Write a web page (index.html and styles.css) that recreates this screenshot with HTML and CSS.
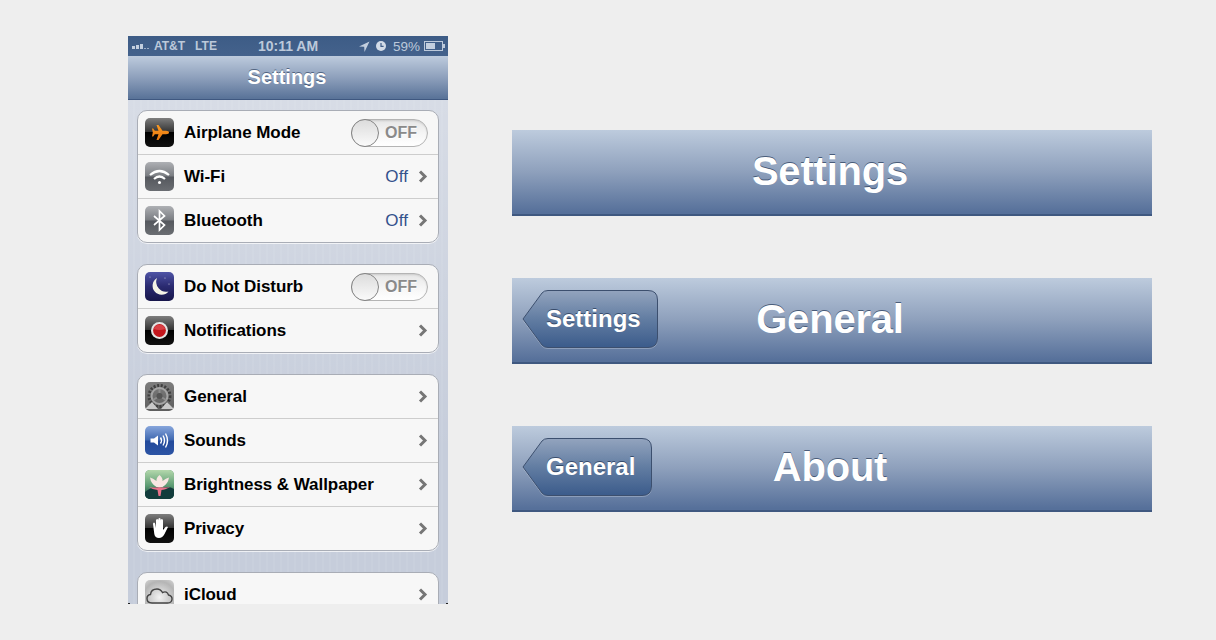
FILE: index.html
```html
<!DOCTYPE html>
<html lang="en">
<head>
  <meta charset="UTF-8" />
  <title>Settings navigation</title>
  <link rel="stylesheet" href="styles.css">
</head>
<body>
  <svg class="defs" width="0" height="0">
    <defs>
      <linearGradient id="backFill" x1="0" y1="0" x2="0" y2="1">
        <stop offset="0" stop-color="#93a4be" />
        <stop offset="0.5" stop-color="#627da2" />
        <stop offset="1" stop-color="#3b5b8b" />
      </linearGradient>
      <linearGradient id="lotusBg" x1="0" y1="0" x2="0" y2="1">
        <stop offset="0" stop-color="#b4d8ac" />
        <stop offset="0.55" stop-color="#5a9a72" />
        <stop offset="1" stop-color="#0f3a3a" />
      </linearGradient>
      <linearGradient id="planeFill" x1="0" y1="0" x2="0" y2="1">
        <stop offset="0" stop-color="#fb9a22" />
        <stop offset="1" stop-color="#e8760f" />
      </linearGradient>
    </defs>
  </svg>

  <div class="phone">
    <div class="status-bar">
      <div class="status-left">
        <span class="signal"><i class="b1"></i><i class="b2"></i><i class="b3"></i><i class="b4"></i><i class="b5"></i></span>
        <span>AT&amp;T</span>
        <span class="lte">LTE</span>
      </div>
      <div class="status-time">10:11 AM</div>
      <div class="status-right">
        <svg width="11" height="11" viewBox="0 0 11 11"><path d="M10.5 .5 L0 5.5 L5.2 5.8 L5.5 11 Z" fill="#c3cfdf" /></svg>
        <svg class="clock" width="10" height="10" viewBox="0 0 10 10"><circle cx="5" cy="5" r="5" fill="#d3dce8" /><path d="M5 2 V5.4 H7.6" stroke="#3f5e88" stroke-width="1.2" fill="none" /></svg>
        <span class="pct">59%</span>
        <span class="battery"><i></i></span>
      </div>
    </div>
    <div class="nav-bar"><span class="nav-title">Settings</span></div>

    <div class="content">
      <div class="group">
        <div class="row">
          <span class="icon icon-gloss">
            <svg viewBox="0 0 29 29"><path d="M24 14.5 Q24 12.8 21 12.8 L17.5 12.8 L13.5 7 L11.5 7 L13.5 12.8 L9.8 12.8 L8.2 10.5 L7 10.5 L7.8 14.5 L7 18.5 L8.2 18.5 L9.8 16.2 L13.5 16.2 L11.5 22 L13.5 22 L17.5 16.2 L21 16.2 Q24 16.2 24 14.5 Z" fill="url(#planeFill)" /></svg>
          </span>
          <span class="label">Airplane Mode</span>
          <span class="toggle"><span class="knob"></span><span class="toggle-text">OFF</span></span>
        </div>
        <div class="row">
          <span class="icon icon-grey">
            <svg viewBox="0 0 29 29" fill="none" stroke="#fff" stroke-width="2.2"><path d="M5 13 Q14.5 5 24 13" /><path d="M9 17 Q14.5 12 20 17" /><circle cx="14.5" cy="20.5" r="1.5" fill="#fff" stroke="none" /></svg>
          </span>
          <span class="label">Wi-Fi</span>
          <span class="value">Off</span>
          <svg class="chevron" viewBox="0 0 10 13"><path d="M2 1.5 L7 6.5 L2 11.5" /></svg>
        </div>
        <div class="row">
          <span class="icon icon-grey">
            <svg viewBox="0 0 29 29" fill="none" stroke="#fff" stroke-width="1.7"><path d="M9 10 L19.5 19 L14.5 24 V5 L19.5 10 L9 19" /></svg>
          </span>
          <span class="label">Bluetooth</span>
          <span class="value">Off</span>
          <svg class="chevron" viewBox="0 0 10 13"><path d="M2 1.5 L7 6.5 L2 11.5" /></svg>
        </div>
      </div>

      <div class="group">
        <div class="row">
          <span class="icon icon-moon">
            <svg viewBox="0 0 29 29"><path d="M12 6 A9 9 0 1 0 23.5 19.5 A10 10 0 0 1 12 6 Z" fill="#f4f3e6" /><circle cx="20" cy="6" r=".6" fill="#ccd" /><circle cx="24" cy="12" r=".6" fill="#ccd" /><circle cx="5" cy="5" r=".5" fill="#ccd" /></svg>
          </span>
          <span class="label">Do Not Disturb</span>
          <span class="toggle"><span class="knob"></span><span class="toggle-text">OFF</span></span>
        </div>
        <div class="row">
          <span class="icon icon-gloss">
            <svg viewBox="0 0 29 29"><circle cx="14.5" cy="14.5" r="8.5" fill="#e4e4e4" /><circle cx="14.5" cy="14.5" r="6.4" fill="#c4161c" /><path d="M8.8 13 A6 6 0 0 1 20.2 13 Q14.5 15 8.8 13 Z" fill="#d84045" /></svg>
          </span>
          <span class="label">Notifications</span>
          <svg class="chevron" viewBox="0 0 10 13"><path d="M2 1.5 L7 6.5 L2 11.5" /></svg>
        </div>
      </div>

      <div class="group">
        <div class="row">
          <span class="icon icon-general">
            <svg viewBox="0 0 29 29"><circle cx="14.5" cy="14" r="10.5" fill="none" stroke="#3f3f3f" stroke-width="3" stroke-dasharray="2 1.6" /><circle cx="14.5" cy="14" r="8" fill="none" stroke="#a5a5a5" stroke-width="2" /><path d="M14.5 7 V11 M8 18 L12 15.5 M21 18 L17 15.5" stroke="#8d8d8d" stroke-width="2" /><circle cx="14.5" cy="14" r="3" fill="#555" /><path d="M0 27 L7 20 L13 27 Z M16 27 L22 20 L29 27 Z" fill="#c9c9c9" /></svg>
          </span>
          <span class="label">General</span>
          <svg class="chevron" viewBox="0 0 10 13"><path d="M2 1.5 L7 6.5 L2 11.5" /></svg>
        </div>
        <div class="row">
          <span class="icon icon-sound">
            <svg viewBox="0 0 29 29"><path d="M5.5 12.5 H9 L13 9.5 V19.5 L9 16.5 H5.5 Z" fill="#fff" /><path d="M15.5 11.5 Q17.5 14.5 15.5 17.5 M18 9.5 Q21 14.5 18 19.5 M20.5 7.5 Q24.5 14.5 20.5 21.5" fill="none" stroke="#fff" stroke-width="1.4" /></svg>
          </span>
          <span class="label">Sounds</span>
          <svg class="chevron" viewBox="0 0 10 13"><path d="M2 1.5 L7 6.5 L2 11.5" /></svg>
        </div>
        <div class="row">
          <span class="icon icon-lotus">
            <svg viewBox="0 0 29 29"><rect width="29" height="29" fill="url(#lotusBg)" /><path d="M0 22 Q9 15 15 19 Q23 15 29 19 V29 H0 Z" fill="#123c3c" /><path d="M14.5 5 Q18 8 17.5 11 Q21 8 24 7.5 Q23 14 17.5 17 H11.5 Q6 14 5 7.5 Q8 8 11.5 11 Q11 8 14.5 5 Z" fill="#f8e6e2" /><path d="M4 17 Q10 18 14.5 17 Q19 18 25 17 Q20 20 16.5 20 L15.5 26 H13.5 L12.5 20 Q8 20 4 17 Z" fill="#e8718a" /></svg>
          </span>
          <span class="label">Brightness &amp; Wallpaper</span>
          <svg class="chevron" viewBox="0 0 10 13"><path d="M2 1.5 L7 6.5 L2 11.5" /></svg>
        </div>
        <div class="row">
          <span class="icon icon-gloss">
            <svg viewBox="0 0 29 29"><path d="M8 10 Q8 8.5 9 8.5 Q10 8.5 10.2 10 L11 14 V6.5 Q11 5 12.2 5 Q13.3 5 13.3 6.5 V13 V5.5 Q13.3 4 14.5 4 Q15.7 4 15.7 5.5 V13 V6.5 Q15.7 5 16.9 5 Q18 5 18 6.5 V16 L20.5 13 Q22 12 23 13 L19.5 20 Q17.5 24 14 24 Q10 24 9.3 20 Z" fill="#fff" /></svg>
          </span>
          <span class="label">Privacy</span>
          <svg class="chevron" viewBox="0 0 10 13"><path d="M2 1.5 L7 6.5 L2 11.5" /></svg>
        </div>
      </div>

      <div class="group">
        <div class="row">
          <span class="icon icon-cloud">
            <svg viewBox="0 0 29 29"><path d="M7 23 Q2 23 2 18.5 Q2 15 5.5 14.5 Q6 9 12 9 Q15.5 9 17.5 12.5 Q22 10.5 23.5 15 Q27.5 16 27 19.5 Q26.5 23 22.5 23 Z" fill="none" stroke="#444" stroke-width="1.4" /></svg>
          </span>
          <span class="label">iCloud</span>
          <svg class="chevron" viewBox="0 0 10 13"><path d="M2 1.5 L7 6.5 L2 11.5" /></svg>
        </div>
      </div>
    </div>
  </div>

  <div class="bars">
    <div class="big-bar"><span class="big-title">Settings</span></div>
    <div class="big-bar">
      <div class="back-btn back-settings">
        <svg class="back-shape" width="136" height="58" viewBox="0 0 136 58"><path d="M1 29 L20 3 Q22 .5 26 .5 H126 Q135.5 .5 135.5 10 V48 Q135.5 57.5 126 57.5 H26 Q22 57.5 20 55 Z" fill="url(#backFill)" stroke="#3c4f6e" /></svg>
        <span class="back-text">Settings</span>
      </div>
      <span class="big-title">General</span>
    </div>
    <div class="big-bar">
      <div class="back-btn back-general">
        <svg class="back-shape" width="130" height="58" viewBox="0 0 130 58"><path d="M1 29 L20 3 Q22 .5 26 .5 H120 Q129.5 .5 129.5 10 V48 Q129.5 57.5 120 57.5 H26 Q22 57.5 20 55 Z" fill="url(#backFill)" stroke="#3c4f6e" /></svg>
        <span class="back-text">General</span>
      </div>
      <span class="big-title">About</span>
    </div>
  </div>
</body>
</html>
```

FILE: styles.css
```css
* {
  box-sizing: border-box;
  margin: 0;
  padding: 0;
}
html, body {
  height: 640px;
  overflow: hidden;
}
body {
  font-family: "Liberation Sans", Arial, sans-serif;
  background: #eeeeee;
  display: flex;
  align-items: flex-start;
  padding: 36px 0 0 128px;
}
.defs {
  position: absolute;
}
.phone {
  position: relative;
  width: 320px;
  height: 568px;
  overflow: hidden;
  flex-shrink: 0;
  background: #cbd1dd;
}
/* little black corner bits left at the bottom of the screenshot */
.phone::before, .phone::after {
  content: "";
  position: absolute;
  bottom: 0;
  width: 2px;
  height: 1px;
  background: #222;
}
.phone::before { left: 0; }
.phone::after { right: 0; }
.status-bar {
  height: 20px;
  display: grid;
  grid-template-columns: 1fr auto 1fr;
  align-items: center;
  background: linear-gradient(#3d5c86, #44628c);
  color: #bcc9da;
  font-size: 13px;
  padding: 0 3px 0 4px;
}
.status-left {
  display: flex;
  align-items: center;
  font-weight: bold;
  font-size: 12px;
}
.signal {
  display: flex;
  align-items: flex-end;
  gap: 1px;
  height: 6px;
  margin-right: 3px;
  width: 19px;
}
.signal i {
  width: 3px;
  background: #c3cfdf;
}
.signal .b1 { height: 3px; }
.signal .b2 { height: 4px; }
.signal .b3 { height: 5px; }
.signal .b4, .signal .b5 { height: 1px; width: 2px; opacity: 0.7; }
.lte {
  margin-left: 10px;
}
.status-time {
  font-weight: bold;
  font-size: 14px;
  color: #bcc9da;
  margin-left: -1px;
}
.status-right {
  display: flex;
  align-items: center;
  justify-content: flex-end;
}
.clock {
  margin-left: 6px;
}
.pct {
  margin-left: 7px;
  font-size: 13.5px;
}
.battery {
  position: relative;
  width: 19px;
  height: 10px;
  margin-left: 4px;
  margin-right: 2px;
  border: 1px solid #bcc9da;
  padding: 1px;
  display: block;
}
.battery::after {
  content: "";
  position: absolute;
  right: -3px;
  top: 2px;
  width: 2px;
  height: 4px;
  background: #bcc9da;
}
.battery i {
  display: block;
  width: 60%;
  height: 100%;
  background: #c3cfdf;
}
.nav-bar {
  height: 44px;
  display: flex;
  align-items: center;
  justify-content: center;
  padding-right: 2px;
  background: linear-gradient(#bdcbdd, #8ea0bc 50%, #5a7499 98%);
  border-bottom: 1px solid #3f5880;
}
.nav-title {
  font-size: 20px;
  font-weight: bold;
  color: #fff;
  text-shadow: 0 -1px 0 rgba(50, 70, 100, 0.7);
}
.content {
  height: 504px;
  padding: 10px 9px 0;
  background:
    linear-gradient(rgba(255, 255, 255, 0.3), rgba(255, 255, 255, 0) 70%),
    repeating-linear-gradient(90deg, #c6cddb 0, #c6cddb 5px, #c9d0dd 5px, #c9d0dd 7px);
  display: flex;
  flex-direction: column;
  gap: 21px;
}
.group {
  background: #f7f7f7;
  border: 1px solid #a9adb6;
  border-radius: 10px;
  box-shadow: 0 1px 0 rgba(255, 255, 255, 0.7);
}
.row {
  height: 44px;
  display: flex;
  align-items: center;
  padding: 0 10px 0 7px;
  border-bottom: 1px solid #cdcdcd;
}
.row:last-child {
  height: 43px;
  border-bottom: none;
}
.icon {
  width: 29px;
  height: 29px;
  border-radius: 5px;
  overflow: hidden;
  flex-shrink: 0;
  margin-right: 10px;
}
.icon svg {
  display: block;
  width: 29px;
  height: 29px;
}
.icon-gloss {
  background: linear-gradient(#7e7e7e, #333 48%, #000 50%, #111);
}
.icon-grey {
  background: linear-gradient(#aeb0b4, #7a7d82 48%, #55585e 52%, #6a6d72);
}
.icon-moon {
  background: linear-gradient(#4f54a6, #2a2a70 50%, #17164a);
}
.icon-general {
  background: linear-gradient(#7d7d7d, #5e5e5e);
}
.icon-sound {
  background: linear-gradient(#87a6dc, #3f68b0 48%, #234a9b 52%, #2c54a4);
}
.icon-lotus {
  background: #4f8f6a;
}
.icon-cloud {
  background: radial-gradient(circle at 50% 60%, #f2f2f2, #b5b5b5 70%, #d5d5d5);
}
.label {
  font-size: 17px;
  font-weight: bold;
  color: #000;
  flex: 1;
  letter-spacing: -0.06px;
  white-space: nowrap;
}
.value {
  font-size: 17px;
  color: #34528c;
  margin-right: 10px;
  letter-spacing: 0.1px;
}
.chevron {
  width: 10px;
  height: 13px;
  flex-shrink: 0;
}
.chevron path {
  fill: none;
  stroke: #767676;
  stroke-width: 3;
}
.toggle {
  width: 77px;
  height: 28px;
  border-radius: 14px;
  border: 1px solid #b4b4b4;
  background: linear-gradient(#e6e6e6, #f5f5f5 50%, #fff);
  box-shadow: inset 0 1px 2px rgba(0, 0, 0, 0.12);
  display: flex;
  align-items: center;
  flex-shrink: 0;
}
.knob {
  width: 28px;
  height: 28px;
  margin-left: -1px;
  border-radius: 50%;
  border: 1px solid #858585;
  background: linear-gradient(#dcdcdc, #fafafa);
}
.toggle-text {
  margin-left: 6px;
  font-size: 16px;
  font-weight: bold;
  color: #8a8a8a;
  text-shadow: 0 1px 0 #fff;
}
.bars {
  margin: 94px 0 0 64px;
  display: flex;
  flex-direction: column;
  gap: 62px;
  width: 640px;
}
.big-bar {
  position: relative;
  height: 86px;
  display: flex;
  align-items: center;
  justify-content: center;
  padding: 0 4px 2px 0;
  background: linear-gradient(#bdcbdd, #8ea0bc 50%, #56709a 98%);
  border-bottom: 2px solid #3f5880;
}
.big-title {
  font-size: 40px;
  font-weight: bold;
  color: #fff;
  letter-spacing: -0.2px;
  text-shadow: 0 -1px 0 rgba(50, 70, 100, 0.8);
}
.back-btn {
  position: absolute;
  left: 10px;
  top: 12px;
  height: 58px;
  display: flex;
  align-items: center;
  padding-left: 24px;
}
.back-settings { width: 136px; }
.back-general { width: 130px; }
.back-shape {
  position: absolute;
  left: 0;
  top: 0;
  filter: drop-shadow(0 1px 0 rgba(255, 255, 255, 0.25));
}
.back-text {
  position: relative;
  font-size: 24px;
  font-weight: bold;
  color: #fff;
  text-shadow: 0 -1px 0 rgba(30, 50, 80, 0.7);
}
```
